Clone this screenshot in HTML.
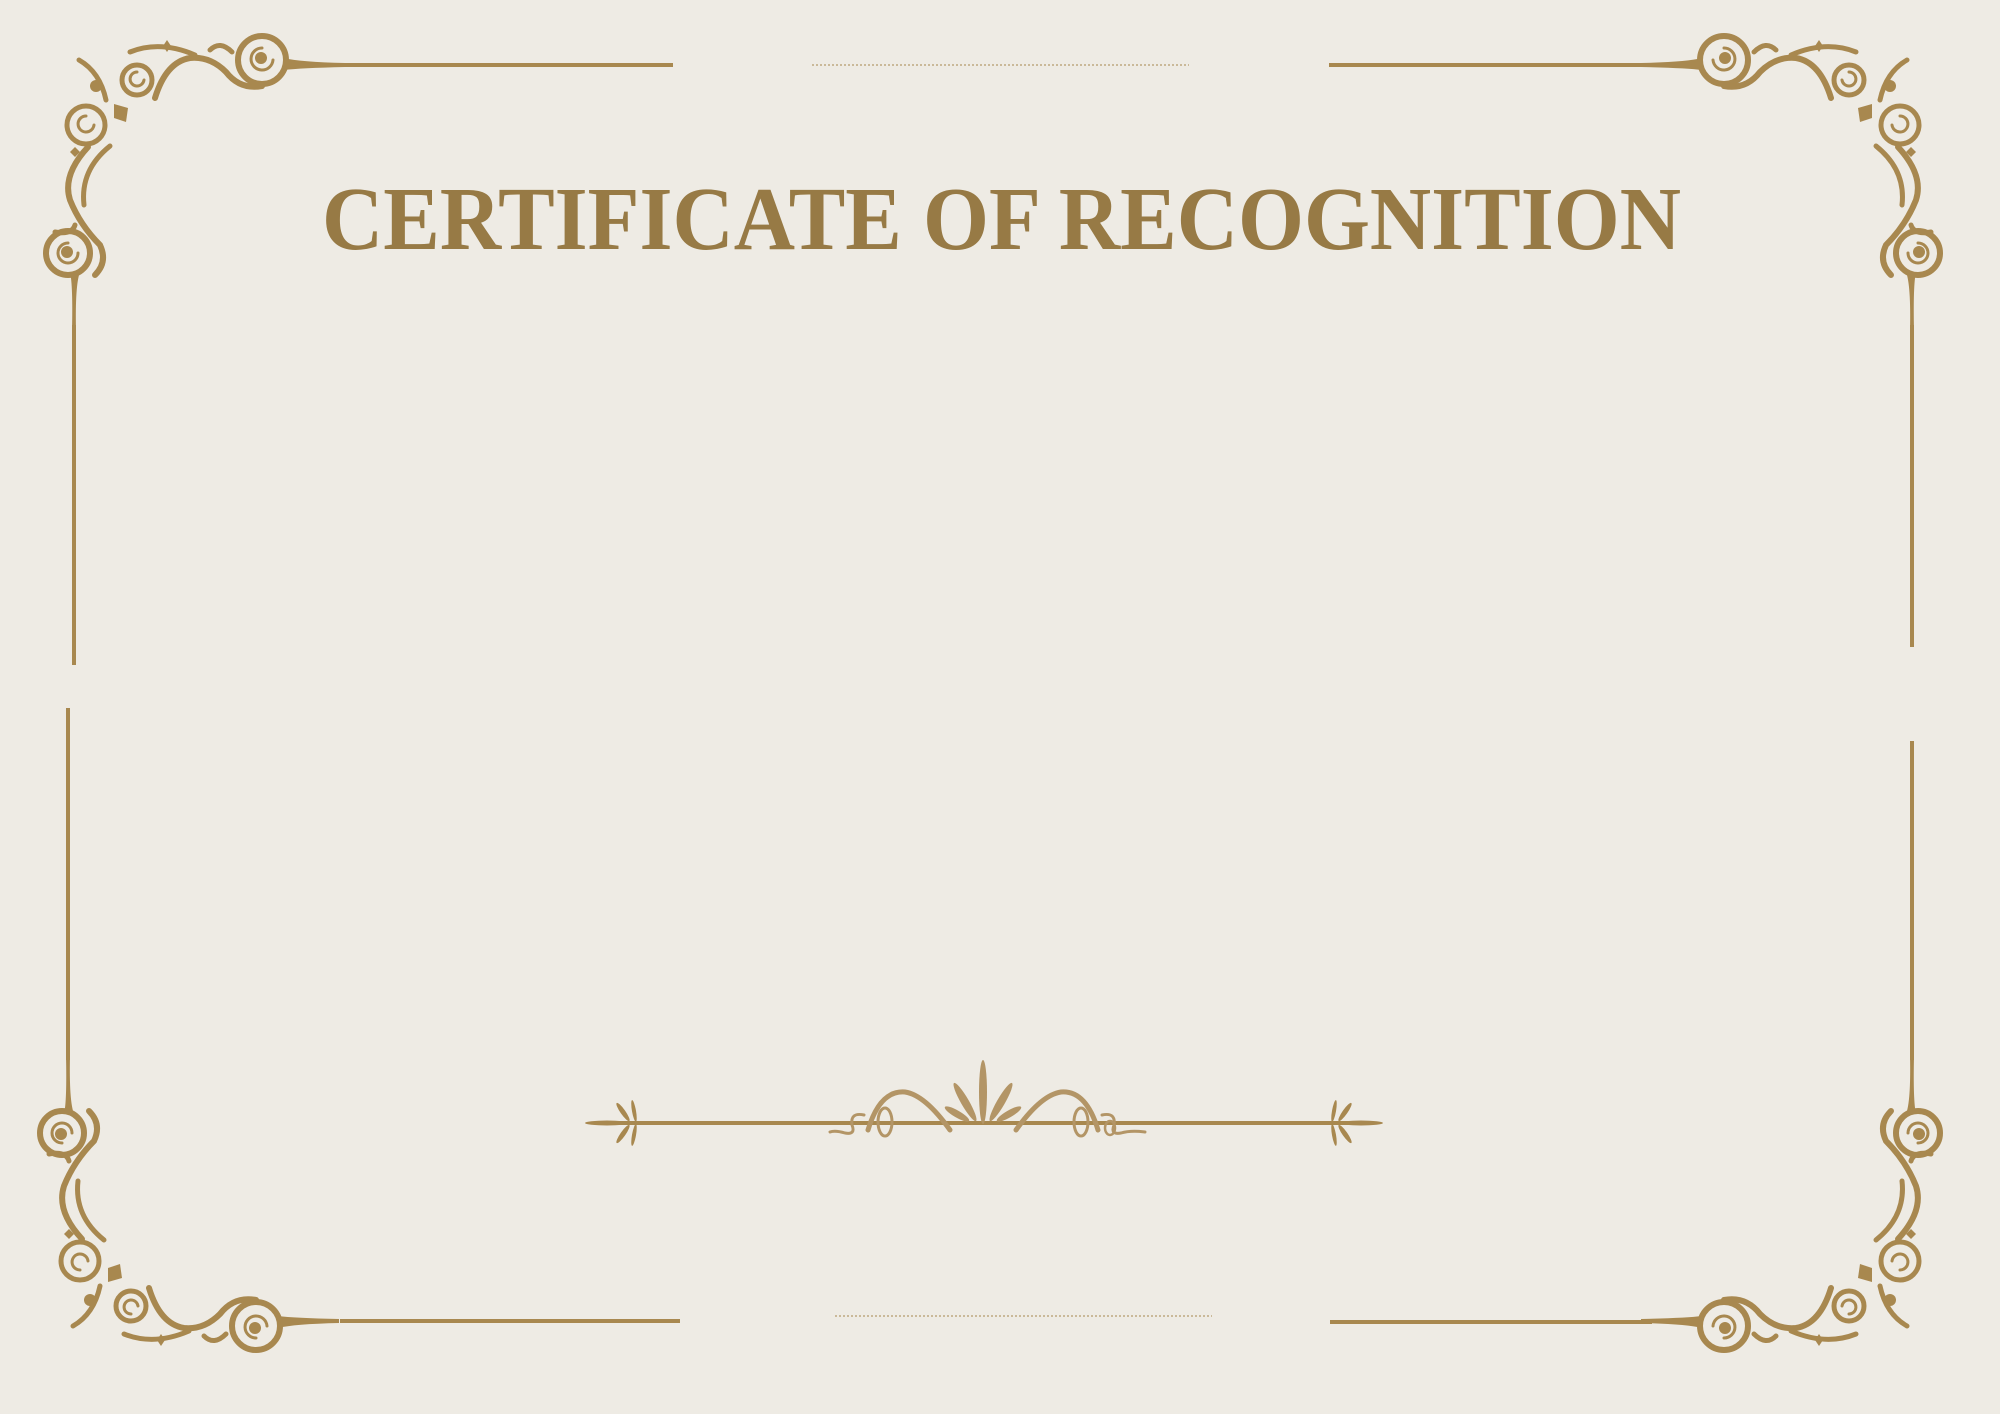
<!DOCTYPE html>
<html><head><meta charset="utf-8"><style>
html,body{margin:0;padding:0;background:#eeebe4;}
svg{display:block}
</style></head><body>
<svg width="2000" height="1414" viewBox="0 0 2000 1414" xmlns="http://www.w3.org/2000/svg">
<rect width="2000" height="1414" fill="#eeebe4"/>
<defs>
<g id="corner" fill="none" stroke="#a8884f" stroke-linecap="round">
  <circle cx="262" cy="60" r="24" stroke-width="6"/>
  <path d="M262 48 a11 11 0 1 0 11 12" stroke-width="3"/>
  <circle cx="261" cy="58" r="6" fill="#a8884f" stroke="none"/>
  <path d="M284 58 Q300 62 345 63 L345 67 Q300 68 284 70 Z" fill="#a8884f" stroke="none"/>
  <path d="M262 86 Q240 90 226 72 Q210 56 190 58 Q166 62 155 98" stroke-width="6"/>
  <path d="M232 52 Q220 40 210 50" stroke-width="5"/>
  <circle cx="137" cy="80" r="15" stroke-width="5"/>
  <path d="M137 72 a7 7 0 1 0 7 8" stroke-width="3"/>
  <path d="M130 52 Q160 40 195 55" stroke-width="5"/>
  <path d="M163 46 l4 -6 l4 6 l-4 6z" fill="#a8884f" stroke="none"/>
  <circle cx="96" cy="86" r="6" fill="#a8884f" stroke="none"/>
  <path d="M79 60 Q100 72 106 100" stroke-width="5"/>
  <path d="M114 104 l14 4 l-2 14 l-12 -4z" fill="#a8884f" stroke="none"/>
  <circle cx="86" cy="125" r="19" stroke-width="5"/>
  <path d="M86 116 a8 8 0 1 0 8 9" stroke-width="3"/>
  <path d="M70 152 l5 -5 l5 5 l-5 5z" fill="#a8884f" stroke="none"/>
  <path d="M88 147 Q62 175 70 200 Q80 225 100 245 Q108 262 95 275" stroke-width="6"/>
  <path d="M110 146 Q80 170 84 205" stroke-width="5"/>
  <path d="M75 225 Q72 235 55 232" stroke-width="5"/>
  <circle cx="68" cy="253" r="22" stroke-width="6"/>
  <path d="M68 243 a10 10 0 1 0 10 10" stroke-width="3"/>
  <circle cx="67" cy="252" r="6" fill="#a8884f" stroke="none"/>
  <path d="M70 272 Q73 285 72 330 L76 330 Q75 285 80 272 Z" fill="#a8884f" stroke="none"/>
</g>
<g id="fan" fill="#a8884f">
  <ellipse cx="0" cy="0" rx="22" ry="2.5"/>
  <ellipse cx="16" cy="-11" rx="11" ry="2.5" transform="rotate(55 16 -11)"/>
  <ellipse cx="16" cy="11" rx="11" ry="2.5" transform="rotate(-55 16 11)"/>
  <ellipse cx="27" cy="-12" rx="11" ry="2" transform="rotate(80 27 -12)"/>
  <ellipse cx="27" cy="12" rx="11" ry="2" transform="rotate(-80 27 12)"/>
</g>
</defs>

<g stroke="#a8884f" stroke-width="4">
  <line x1="340" y1="65" x2="673" y2="65"/>
  <line x1="1329" y1="65" x2="1652" y2="65"/>
  <line x1="340" y1="1321" x2="680" y2="1321"/>
  <line x1="1330" y1="1322" x2="1652" y2="1322"/>
  <line x1="74" y1="325" x2="74" y2="665"/>
  <line x1="1912" y1="325" x2="1912" y2="647"/>
  <line x1="68" y1="708" x2="68" y2="1060"/>
  <line x1="1912" y1="741" x2="1912" y2="1060"/>
</g>
<g stroke="#a8884f" stroke-width="1.2" stroke-dasharray="2 2" opacity="0.8">
  <line x1="812" y1="65" x2="1189" y2="65"/>
  <line x1="835" y1="1316" x2="1212" y2="1316"/>
</g>

<use href="#corner"/>
<use href="#corner" transform="translate(1986,0) scale(-1,1)"/>
<use href="#corner" transform="translate(-6,1386) scale(1,-1)"/>
<use href="#corner" transform="translate(1986,1386) scale(-1,-1)"/>

<text x="322" y="249" font-family="Liberation Serif, serif" font-weight="bold" font-size="90" fill="#977a45" textLength="1359" lengthAdjust="spacingAndGlyphs">CERTIFICATE OF RECOGNITION</text>

<g>
  <line x1="610" y1="1123" x2="1360" y2="1123" stroke="#a8884f" stroke-width="4"/>
  <use href="#fan" transform="translate(607,1123)"/>
  <use href="#fan" transform="translate(1361,1123) scale(-1,1)"/>
  <g fill="#b39566">
    <ellipse cx="983" cy="1092" rx="4" ry="32"/>
    <ellipse cx="965" cy="1102" rx="4" ry="22" transform="rotate(-30 965 1102)"/>
    <ellipse cx="1001" cy="1102" rx="4" ry="22" transform="rotate(30 1001 1102)"/>
    <ellipse cx="957" cy="1114" rx="3.5" ry="14" transform="rotate(-60 957 1114)"/>
    <ellipse cx="1009" cy="1114" rx="3.5" ry="14" transform="rotate(60 1009 1114)"/>
  </g>
  <g fill="none" stroke="#b39566" stroke-width="5" stroke-linecap="round">
    <path d="M950 1130 Q925 1095 905 1092 Q880 1090 868 1130"/>
    <path d="M1016 1130 Q1041 1095 1061 1092 Q1086 1090 1098 1130"/>
    <ellipse cx="885" cy="1122" rx="7" ry="14" stroke-width="3"/>
    <ellipse cx="1081" cy="1122" rx="7" ry="14" stroke-width="3"/>
    <path d="M864 1115 Q850 1112 852 1125 Q856 1135 845 1133 Q835 1130 830 1132" stroke-width="3"/>
    <path d="M1102 1115 Q1116 1112 1114 1125 Q1110 1135 1121 1133 Q1131 1130 1145 1132" stroke-width="3"/>
    <ellipse cx="1110" cy="1128" rx="5" ry="7" stroke-width="2.5"/>
  </g>
</g>
</svg>
</body></html>
